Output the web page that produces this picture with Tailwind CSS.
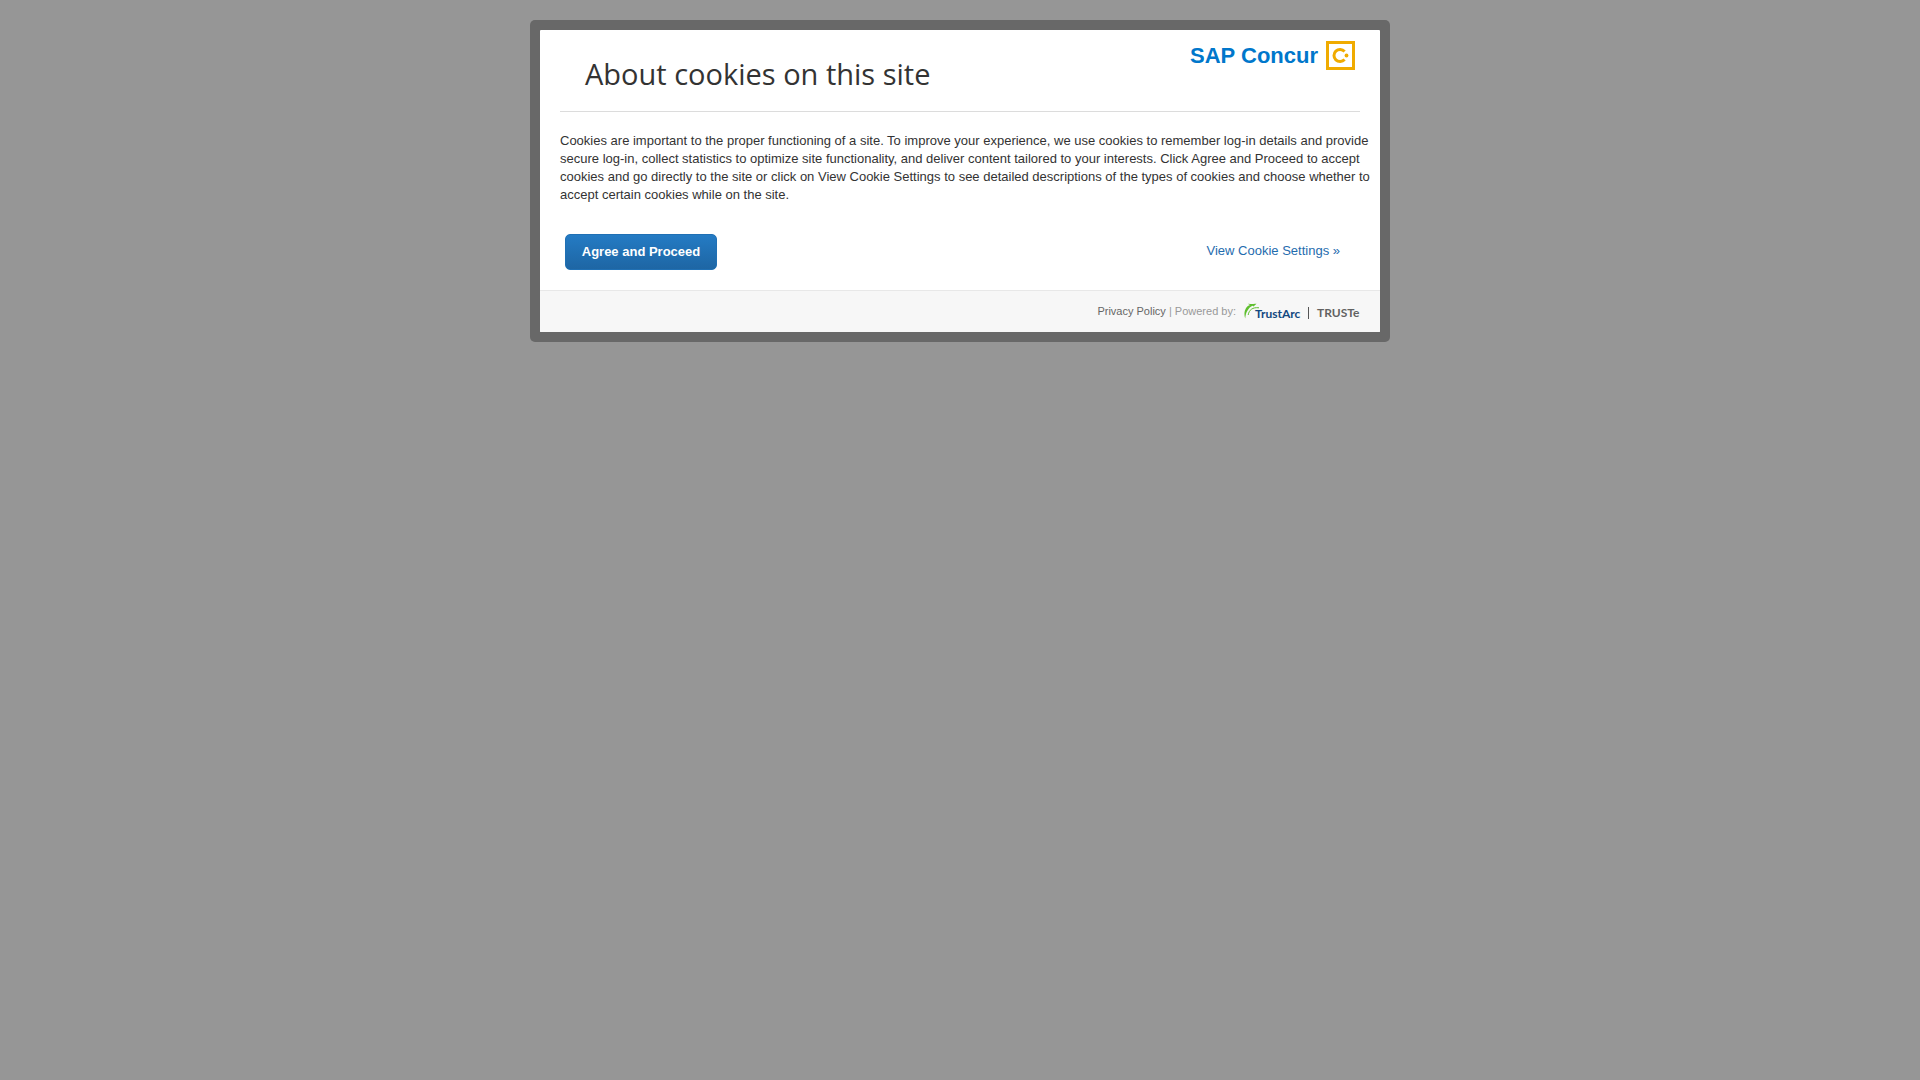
<!DOCTYPE html>
<html lang="en">
<head>
<meta charset="utf-8">
<title>About cookies on this site</title>
<script src="https://cdn.jsdelivr.net/npm/@tailwindcss/browser@4"></script>
</head>
<body class="min-h-screen bg-[#969696] px-4 py-5 font-['Liberation_Sans',sans-serif] text-[#333]">
<main role="dialog" aria-labelledby="title" class="mx-auto max-w-[860px] rounded-[5px] bg-[#686868] p-[10px]">
  <div class="overflow-hidden rounded-[1px] bg-white">
    <div class="px-5">
      <header class="flex h-[82px] items-start justify-between border-b border-[#dcdcdc] pr-[5px] pl-[25px]">
        <h1 id="title" class="pt-[23px] font-['Open_Sans',sans-serif] text-[29px] leading-[42px] font-normal">About cookies on this site</h1>
        <div class="flex items-center gap-2 pt-[11px]">
          <span class="text-[22px] leading-[29px] font-bold text-[#0077cb]">SAP Concur</span>
          <svg class="size-[29px]" viewBox="0 0 29 29" fill="none" aria-hidden="true">
            <rect x="1.5" y="1.5" width="26" height="26" stroke="#f0ab00" stroke-width="3"/>
            <path d="M18.6 10.4A6.1 6.1 0 1 0 18.6 18.6" stroke="#f0ab00" stroke-width="3"/>
            <circle cx="20.5" cy="14.5" r="1.9" fill="#f0ab00"/>
          </svg>
        </div>
      </header>
      <p class="-mr-5 pt-5 text-[13px] leading-[18px]">Cookies are important to the proper functioning of a site. To improve your experience, we use cookies to remember log-in details and provide secure log-in, collect statistics to optimize site functionality, and deliver content tailored to your interests. Click Agree and Proceed to accept cookies and go directly to the site or click on View Cookie Settings to see detailed descriptions of the types of cookies and choose whether to accept certain cookies while on the site.</p>
      <div class="flex items-center justify-between pt-[30px] pr-5 pb-5 pl-[5px]">
        <button type="button" class="h-9 w-[152px] rounded-[5px] border border-[#2070b4] bg-linear-to-b from-[#247bc4] to-[#1e66a4] text-[13px] font-bold text-white">Agree and Proceed</button>
        <a href="#" class="pb-[2px] text-[13px] leading-[18px] text-[#1f6cae]">View Cookie Settings »</a>
      </div>
    </div>
    <footer class="flex h-[42px] items-center justify-end border-t border-[#e8e8e8] bg-[#f7f7f7] px-5 text-[11px] text-[#999]">
      <span><a href="#" class="text-[#666]">Privacy Policy</a> | Powered by:</span>
      <svg class="ml-2 h-[18px] w-[116px]" viewBox="0 0 116 18" aria-label="TrustArc | TRUSTe">
        <path d="M1.2 15.5C-1 9 2 3 6 2L3.8.7C8 1 11 .9 12.5.8L9.5 3.4 8.6 2.7C4.5 4.5 1.8 9 1.2 15.5Z" fill="#5fbf2f"/>
        <path d="M4.2 12C5 7 8.5 4 15 4.8" fill="none" stroke="#5fbf2f" stroke-width="1"/>
        <text x="11" y="15" font-family="Lato, sans-serif" font-size="12" font-weight="700" fill="#12487f">TrustArc</text>
        <path d="M64.5 4v12" stroke="#555"/>
        <text x="73" y="14" font-family="Lato, sans-serif" font-size="12" font-weight="700" fill="#626262">TRUSTe</text>
      </svg>
    </footer>
  </div>
</main>
</body>
</html>
